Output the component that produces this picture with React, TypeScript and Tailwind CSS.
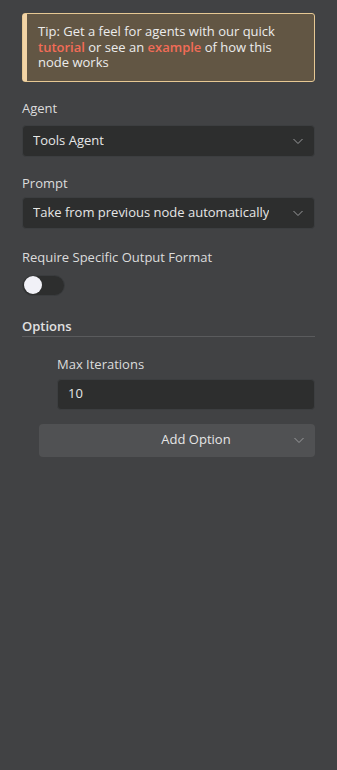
import React, { useState } from 'react';

const Chevron: React.FC = () => (
  <svg width="12" height="12" viewBox="0 0 12 12" fill="none" className="text-[#9a9b9d]">
    <path d="M1.5 4L6 8.5L10.5 4" stroke="currentColor" strokeWidth="1" />
  </svg>
);

const Label: React.FC<{ children: React.ReactNode; className?: string }> = ({ children, className = '' }) => (
  <div className={`text-[13px] leading-4 text-[#dcdcdc] ${className}`}>{children}</div>
);

const SelectBox: React.FC<{ value: string }> = ({ value }) => (
  <div className="h-8 flex items-center justify-between rounded-[4px] border border-[#3c3e40] bg-[#2d2e2e] pl-[10px] pr-[10px]">
    <span className="text-[13px] text-[#e6e6e6] truncate">{value}</span>
    <Chevron />
  </div>
);

export default function App() {
  const [requireFormat, setRequireFormat] = useState(false);

  return (
    <div
      className="min-h-[770px] w-full bg-[#414244] px-[22px] pt-[13px]"
      style={{ fontFamily: '"Open Sans", "Noto Sans", sans-serif' }}
    >
      <div className="flex rounded-[3px] border border-[#e6c894] bg-[#625644]">
        <div className="w-[4px] shrink-0 bg-[#f2d4a6]" />
        <p className="pl-[11px] pr-3 pt-[10px] pb-[10px] text-[13px] leading-[15.5px] text-[#ececec]">
          Tip: Get a feel for agents with our quick{' '}
          <span className="font-semibold text-[#f26c57]">tutorial</span> or see an{' '}
          <span className="font-semibold text-[#f26c57]">example</span> of how this node works
        </p>
      </div>

      <Label className="mt-[18px] mb-[9px]">Agent</Label>
      <SelectBox value="Tools Agent" />

      <Label className="mt-[18px] mb-[6px]">Prompt</Label>
      <SelectBox value="Take from previous node automatically" />

      <Label className="mt-[20px] mb-[10px]">Require Specific Output Format</Label>
      <button
        onClick={() => setRequireFormat(!requireFormat)}
        className={`relative block h-[21px] w-[43px] rounded-full border border-[#3a3c3e] ${requireFormat ? 'bg-[#ff6d5a]' : 'bg-[#2d2e2e]'}`}
      >
        <span
          className={`absolute top-[0.5px] h-[18px] w-[18px] rounded-full bg-[#f1f1f7] ${requireFormat ? 'left-[22px]' : 'left-[0.5px]'}`}
        />
      </button>

      <div className="mt-[22px] border-b border-[#5a5b5d] pb-[2px] text-[13px] font-semibold leading-4 text-[#e0e0e0]">
        Options
      </div>

      <div className="pl-[35px]">
        <Label className="mt-[19px] mb-[7px]">Max Iterations</Label>
        <div className="h-[31px] flex items-center rounded-[4px] border border-[#3c3e40] bg-[#2d2e2e] px-[10px] text-[13px] text-[#e6e6e6]">
          10
        </div>
      </div>

      <div className="mt-[14px] ml-[17px] h-[33px] flex items-center rounded-[4px] bg-[#505153] pr-[10px]">
        <span className="flex-1 text-center pl-[60px] text-[13px] text-[#e6e6e6]">Add Option</span>
        <Chevron />
      </div>
    </div>
  );
}
